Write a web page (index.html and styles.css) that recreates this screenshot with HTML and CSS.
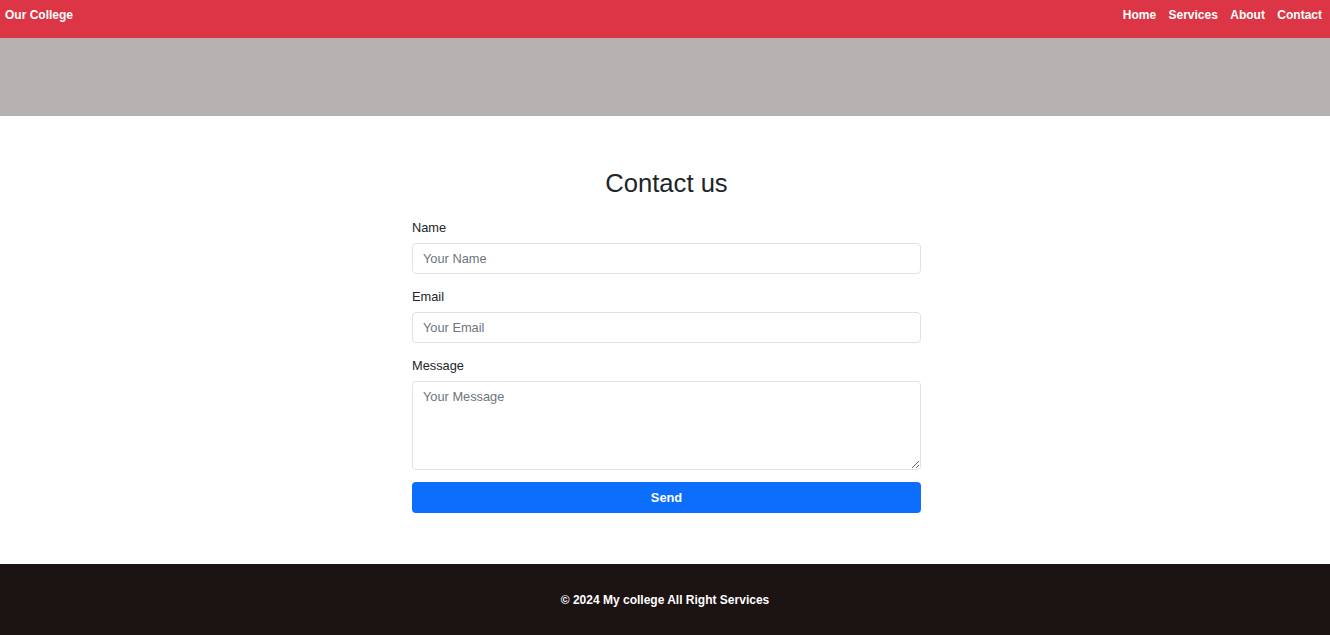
FILE: index.html
```html
<!DOCTYPE html>
<html>
<head>
<meta charset="utf-8">
<title>Contact</title>
<link rel="stylesheet" href="styles.css">
</head>
<body>
<header class="navbar">
  <a class="brand" href="#">Our College</a>
  <nav class="nav">
    <a href="#">Home</a>
    <a href="#">Services</a>
    <a href="#">About</a>
    <a href="#">Contact</a>
  </nav>
</header>
<div class="banner"></div>
<main class="main">
  <form class="contact">
    <h3 class="title">Contact us</h3>
    <div class="group">
      <label class="label" for="name">Name</label>
      <input class="field" id="name" type="text" placeholder="Your Name">
    </div>
    <div class="group">
      <label class="label" for="email">Email</label>
      <input class="field" id="email" type="email" placeholder="Your Email">
    </div>
    <div class="group">
      <label class="label" for="msg">Message</label>
      <textarea class="field area" id="msg" placeholder="Your Message"></textarea>
    </div>
    <button class="send" type="button">Send</button>
  </form>
</main>
<footer class="footer">© 2024 My college All Right Services</footer>
</body>
</html>
```
FILE: styles.css
```css
* { box-sizing: border-box; }
html, body { margin: 0; padding: 0; }
body {
  font-family: "Liberation Sans", Arial, sans-serif;
  font-size: 12.8px;
  line-height: 1.5;
  color: #212529;
  background: #fff;
}
.navbar {
  height: 38px;
  background: #dc3545;
  display: flex;
  justify-content: space-between;
  align-items: flex-start;
  padding: 6px 8px 0 5px;
}
.navbar a {
  color: #fff;
  text-decoration: none;
  font-weight: bold;
  font-size: 12px;
  line-height: 19px;
}
.nav { display: flex; gap: 12.4px; }
.banner { height: 78px; background: #b6b2b1; }
.main {
  display: flex;
  justify-content: center;
  padding: 50px 0 51px 3px;
}
.contact { width: 509px; }
.title {
  margin: 0 0 17px;
  text-align: center;
  font-size: 25.6px;
  font-weight: normal;
  line-height: 34px;
}
.group { margin-bottom: 12px; }
.label {
  display: block;
  margin-bottom: 5px;
  line-height: 21px;
}
.field {
  display: block;
  width: 100%;
  height: 31px;
  padding: 4px 10px;
  font-family: inherit;
  font-size: 12.8px;
  line-height: 21px;
  color: #212529;
  border: 1px solid #dee2e6;
  border-radius: 4px;
  background: #fff;
}
.field::placeholder { color: #6c757d; }
.area { height: 89px; resize: vertical; }
.send {
  display: block;
  width: 100%;
  height: 31px;
  border: 0;
  border-radius: 4px;
  background: #0d6efd;
  color: #fff;
  font-family: inherit;
  font-size: 12.8px;
  font-weight: bold;
}
.footer {
  height: 71px;
  background: #1c1313;
  color: #fff;
  font-weight: bold;
  font-size: 12px;
  text-align: center;
  padding-top: 27px;
  line-height: 19px;
}
```
